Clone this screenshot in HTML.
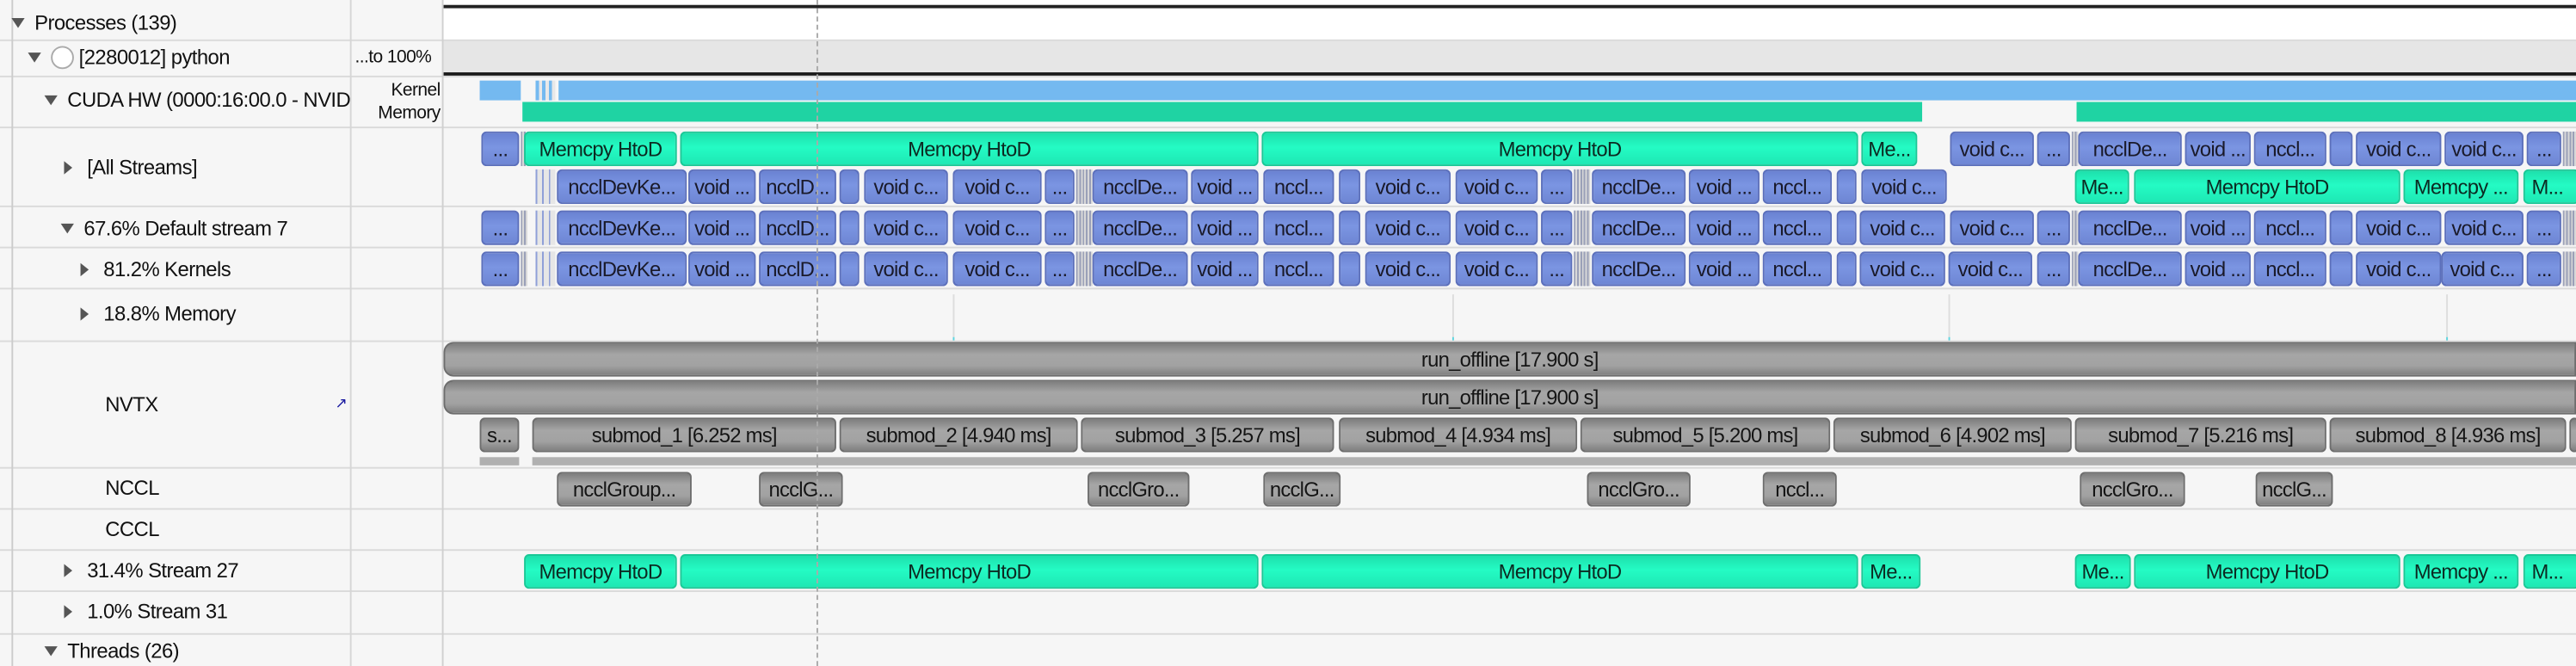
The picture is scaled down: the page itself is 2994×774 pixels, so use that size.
<!DOCTYPE html>
<html><head><meta charset="utf-8"><style>
html,body{margin:0;padding:0;width:2994px;height:774px;overflow:hidden;background:#f6f6f6}
#w{position:absolute;left:0;top:0;width:1568px;height:405px;transform-origin:0 0;transform:scale(1.90944,1.91111);font-family:"Liberation Sans",sans-serif;color:#111;background:#f6f6f6}
.a{position:absolute}
.hl{position:absolute;left:0;width:1568px;height:1px;background:#dadada}
.lab{position:absolute;font-size:12.5px;line-height:14px;white-space:nowrap;letter-spacing:-0.3px}
.tri{display:inline-block;width:0;height:0;border-left:4px solid transparent;border-right:4px solid transparent;border-top:6px solid #555;margin-right:6px;vertical-align:1px}
.trr{display:inline-block;width:0;height:0;border-top:4px solid transparent;border-bottom:4px solid transparent;border-left:5px solid #555;margin-right:9px;vertical-align:0px}
.r{position:absolute;left:0;width:1568px}
.b{position:absolute;top:0;height:21px;box-sizing:border-box;border-radius:3px;font-size:12.5px;line-height:20px;text-align:center;overflow:hidden;white-space:nowrap;letter-spacing:-0.4px;color:#1a1a2a}
.k{background:linear-gradient(#6a82d2,#7b95e2 45%,#6e86d4);border:1px solid #5b6fbb}
.m{background:linear-gradient(#1ee0ac,#24fbc4 45%,#1ee8b4);border:1px solid #19c896;color:#0c2a22}
.g{background:linear-gradient(#7e7e7e,#a6a6a6 35%,#a2a2a2 70%,#808080);border:1px solid #6d6d6d;color:#151515}
.s{position:absolute;top:0;height:21px;background:repeating-linear-gradient(90deg,#9aa0b8 0 1px,#d8d8d8 1px 2px)}
</style></head><body><div id="w">
<div class="a" style="left:0;top:0;width:1568px;height:24px;background:#f6f6f6"></div>
<div class="a" style="left:270px;top:0;width:1298px;height:24px;background:#fff"></div>
<div class="a" style="left:270px;top:3px;width:1298px;height:2px;background:#222"></div>
<div class="a" style="left:270px;top:25px;width:1298px;height:20px;background:#e6e6e6"></div>
<div class="a" style="left:270px;top:44px;width:1298px;height:2px;background:#1a1a1a"></div>
<div class="hl" style="top:24px"></div><div class="hl" style="top:46px"></div><div class="hl" style="top:77px"></div>
<div class="hl" style="top:125px"></div><div class="hl" style="top:150px"></div><div class="hl" style="top:175px"></div>
<div class="hl" style="top:207px"></div><div class="hl" style="top:284px"></div><div class="hl" style="top:309px"></div>
<div class="hl" style="top:334px"></div><div class="hl" style="top:359px"></div><div class="hl" style="top:385px"></div>
<div class="a" style="left:7px;top:0;width:1px;height:405px;background:#ccc"></div>
<div class="a" style="left:213px;top:0;width:1px;height:405px;background:#d6d6d6"></div>
<div class="a" style="left:269px;top:0;width:1px;height:405px;background:#d0d0d0"></div>
<div class="lab" style="left:7px;top:7px"><span class="tri"></span>Processes (139)</div>
<div class="lab" style="left:17px;top:28px"><span class="tri"></span><span style="display:inline-block;width:12px;height:12px;border:1px solid #aaa;border-radius:50%;vertical-align:-3px;margin-right:3px;background:#fff"></span>[2280012] python</div>
<div class="lab" style="left:216px;top:28px;font-size:11px">...to 100%</div>
<div class="lab" style="left:27px;top:54px;width:186px;overflow:hidden"><span class="tri"></span>CUDA HW (0000:16:00.0 - NVIDIA</div>
<div class="lab" style="left:230px;top:48px;font-size:11px;text-align:right;width:38px;line-height:14px">Kernel<br>Memory</div>
<div class="lab" style="left:39px;top:95px"><span class="trr"></span>[All Streams]</div>
<div class="lab" style="left:37px;top:132px"><span class="tri"></span>67.6% Default stream 7</div>
<div class="lab" style="left:49px;top:157px"><span class="trr"></span>81.2% Kernels</div>
<div class="lab" style="left:49px;top:184px"><span class="trr"></span>18.8% Memory</div>
<div class="lab" style="left:64px;top:239px">NVTX</div>
<div class="a" style="left:204px;top:240px;font-size:9px;color:#1a1aa0">&#8599;</div>
<div class="lab" style="left:64px;top:290px">NCCL</div>
<div class="lab" style="left:64px;top:315px">CCCL</div>
<div class="lab" style="left:39px;top:340px"><span class="trr"></span>31.4% Stream 27</div>
<div class="lab" style="left:39px;top:365px"><span class="trr"></span>1.0% Stream 31</div>
<div class="lab" style="left:27px;top:389px"><span class="tri"></span>Threads (26)</div>
<div class="a" style="left:292px;top:49px;width:25px;height:12px;background:#74b9f0"></div>
<div class="a" style="left:326px;top:49px;width:12px;height:12px;background:repeating-linear-gradient(90deg,#74b9f0 0 2px,#e8e8e8 2px 4px)"></div>
<div class="a" style="left:340px;top:49px;width:1228px;height:12px;background:#74b9f0"></div>
<div class="a" style="left:318px;top:62px;width:852px;height:12px;background:#1fd3a3"></div>
<div class="a" style="left:1264px;top:62px;width:304px;height:12px;background:#1fd3a3"></div>
<div class="r" style="top:80px">
<div class="b k" style="left:293px;width:23px">...</div><div class="s" style="left:317px;width:3px"></div>
<div class="b m" style="left:319px;width:93px">Memcpy HtoD</div>
<div class="b m" style="left:414px;width:352px">Memcpy HtoD</div>
<div class="b m" style="left:768px;width:363px">Memcpy HtoD</div>
<div class="b m" style="left:1133px;width:34px">Me...</div>
<div class="b k" style="left:1187px;width:51px">void c...</div>
<div class="b k" style="left:1240px;width:20px">...</div><div class="s" style="left:1261px;width:4px"></div>
<div class="b k" style="left:1265px;width:63px">ncclDe...</div>
<div class="b k" style="left:1330px;width:40px">void ...</div>
<div class="b k" style="left:1372px;width:44px">nccl...</div>
<div class="b k" style="left:1418px;width:14px"></div>
<div class="b k" style="left:1434px;width:52px">void c...</div>
<div class="b k" style="left:1488px;width:48px">void c...</div>
<div class="b k" style="left:1538px;width:21px">...</div><div class="s" style="left:1560px;width:8px"></div>
</div>
<div class="r" style="top:103px">
<div class="s" style="left:326px;width:12px;background:repeating-linear-gradient(90deg,#8fa0d8 0 1px,#e6e6e6 1px 4px)"></div>
<div class="b k" style="left:339px;width:79px">ncclDevKe...</div>
<div class="b k" style="left:419px;width:41px">void ...</div>
<div class="b k" style="left:462px;width:47px">ncclD...</div>
<div class="b k" style="left:511px;width:12px"></div>
<div class="b k" style="left:526px;width:51px">void c...</div>
<div class="b k" style="left:580px;width:54px">void c...</div>
<div class="b k" style="left:636px;width:18px">...</div><div class="s" style="left:655px;width:10px"></div>
<div class="b k" style="left:665px;width:58px">ncclDe...</div>
<div class="b k" style="left:725px;width:41px">void ...</div>
<div class="b k" style="left:769px;width:43px">nccl...</div>
<div class="b k" style="left:815px;width:13px"></div>
<div class="b k" style="left:831px;width:52px">void c...</div>
<div class="b k" style="left:886px;width:50px">void c...</div>
<div class="b k" style="left:938px;width:19px">...</div><div class="s" style="left:958px;width:10px"></div>
<div class="b k" style="left:969px;width:57px">ncclDe...</div>
<div class="b k" style="left:1028px;width:43px">void ...</div>
<div class="b k" style="left:1073px;width:42px">nccl...</div>
<div class="b k" style="left:1118px;width:12px"></div>
<div class="b k" style="left:1133px;width:52px">void c...</div>
<div class="b m" style="left:1263px;width:33px">Me...</div>
<div class="b m" style="left:1299px;width:162px">Memcpy HtoD</div>
<div class="b m" style="left:1463px;width:70px">Memcpy ...</div>
<div class="b m" style="left:1536px;width:34px;text-align:left;padding-left:4px">M...</div>
</div>
<div class="r" style="top:128px">
<div class="b k" style="left:293px;width:23px">...</div><div class="s" style="left:317px;width:4px"></div>
<div class="s" style="left:326px;width:12px;background:repeating-linear-gradient(90deg,#8fa0d8 0 1px,#e6e6e6 1px 4px)"></div>
<div class="b k" style="left:339px;width:79px">ncclDevKe...</div>
<div class="b k" style="left:419px;width:41px">void ...</div>
<div class="b k" style="left:462px;width:47px">ncclD...</div>
<div class="b k" style="left:511px;width:12px"></div>
<div class="b k" style="left:526px;width:51px">void c...</div>
<div class="b k" style="left:580px;width:54px">void c...</div>
<div class="b k" style="left:636px;width:18px">...</div><div class="s" style="left:655px;width:10px"></div>
<div class="b k" style="left:665px;width:58px">ncclDe...</div>
<div class="b k" style="left:725px;width:41px">void ...</div>
<div class="b k" style="left:769px;width:43px">nccl...</div>
<div class="b k" style="left:815px;width:13px"></div>
<div class="b k" style="left:831px;width:52px">void c...</div>
<div class="b k" style="left:886px;width:50px">void c...</div>
<div class="b k" style="left:938px;width:19px">...</div><div class="s" style="left:958px;width:10px"></div>
<div class="b k" style="left:969px;width:57px">ncclDe...</div>
<div class="b k" style="left:1028px;width:43px">void ...</div>
<div class="b k" style="left:1073px;width:42px">nccl...</div>
<div class="b k" style="left:1118px;width:12px"></div>
<div class="b k" style="left:1132px;width:52px">void c...</div>
<div class="b k" style="left:1187px;width:51px">void c...</div>
<div class="b k" style="left:1240px;width:20px">...</div><div class="s" style="left:1261px;width:4px"></div>
<div class="b k" style="left:1265px;width:63px">ncclDe...</div>
<div class="b k" style="left:1330px;width:40px">void ...</div>
<div class="b k" style="left:1372px;width:44px">nccl...</div>
<div class="b k" style="left:1418px;width:14px"></div>
<div class="b k" style="left:1434px;width:52px">void c...</div>
<div class="b k" style="left:1488px;width:48px">void c...</div>
<div class="b k" style="left:1538px;width:21px">...</div><div class="s" style="left:1560px;width:8px"></div>
</div>
<div class="r" style="top:153px">
<div class="b k" style="left:293px;width:23px">...</div><div class="s" style="left:317px;width:4px"></div>
<div class="s" style="left:326px;width:12px;background:repeating-linear-gradient(90deg,#8fa0d8 0 1px,#e6e6e6 1px 4px)"></div>
<div class="b k" style="left:339px;width:79px">ncclDevKe...</div>
<div class="b k" style="left:419px;width:41px">void ...</div>
<div class="b k" style="left:462px;width:47px">ncclD...</div>
<div class="b k" style="left:511px;width:12px"></div>
<div class="b k" style="left:526px;width:51px">void c...</div>
<div class="b k" style="left:580px;width:54px">void c...</div>
<div class="b k" style="left:636px;width:18px">...</div><div class="s" style="left:655px;width:10px"></div>
<div class="b k" style="left:665px;width:58px">ncclDe...</div>
<div class="b k" style="left:725px;width:41px">void ...</div>
<div class="b k" style="left:769px;width:43px">nccl...</div>
<div class="b k" style="left:815px;width:13px"></div>
<div class="b k" style="left:831px;width:52px">void c...</div>
<div class="b k" style="left:886px;width:50px">void c...</div>
<div class="b k" style="left:938px;width:19px">...</div><div class="s" style="left:958px;width:10px"></div>
<div class="b k" style="left:969px;width:57px">ncclDe...</div>
<div class="b k" style="left:1028px;width:43px">void ...</div>
<div class="b k" style="left:1073px;width:42px">nccl...</div>
<div class="b k" style="left:1118px;width:12px"></div>
<div class="b k" style="left:1132px;width:52px">void c...</div>
<div class="b k" style="left:1186px;width:51px">void c...</div>
<div class="b k" style="left:1240px;width:20px">...</div><div class="s" style="left:1261px;width:4px"></div>
<div class="b k" style="left:1265px;width:63px">ncclDe...</div>
<div class="b k" style="left:1330px;width:40px">void ...</div>
<div class="b k" style="left:1372px;width:44px">nccl...</div>
<div class="b k" style="left:1418px;width:14px"></div>
<div class="b k" style="left:1434px;width:52px">void c...</div>
<div class="b k" style="left:1486px;width:50px">void c...</div>
<div class="b k" style="left:1538px;width:21px">...</div><div class="s" style="left:1560px;width:8px"></div>
</div>
<div class="a" style="left:580px;top:179px;width:1px;height:26px;background:#ddd;border-bottom:2px solid #5cd6e0"></div>
<div class="a" style="left:884px;top:179px;width:1px;height:26px;background:#ddd;border-bottom:2px solid #5cd6e0"></div>
<div class="a" style="left:1186px;top:179px;width:1px;height:26px;background:#ddd;border-bottom:2px solid #5cd6e0"></div>
<div class="a" style="left:1489px;top:179px;width:1px;height:26px;background:#ddd;border-bottom:2px solid #5cd6e0"></div>
<div class="r" style="top:208px"><div class="b g" style="left:270px;width:1298px;height:21px;line-height:20px;border-radius:6px 0 0 6px">run_offline [17.900 s]</div></div>
<div class="r" style="top:231px"><div class="b g" style="left:270px;width:1298px;height:21px;line-height:20px;border-radius:6px 0 0 6px">run_offline [17.900 s]</div></div>
<div class="r" style="top:254px">
<div class="b g" style="left:292px;width:24px">s...</div>
<div class="b g" style="left:324px;width:185px">submod_1 [6.252 ms]</div>
<div class="b g" style="left:511px;width:145px">submod_2 [4.940 ms]</div>
<div class="b g" style="left:658px;width:154px">submod_3 [5.257 ms]</div>
<div class="b g" style="left:815px;width:145px">submod_4 [4.934 ms]</div>
<div class="b g" style="left:962px;width:152px">submod_5 [5.200 ms]</div>
<div class="b g" style="left:1116px;width:145px">submod_6 [4.902 ms]</div>
<div class="b g" style="left:1263px;width:153px">submod_7 [5.216 ms]</div>
<div class="b g" style="left:1418px;width:144px">submod_8 [4.936 ms]</div>
<div class="b g" style="left:1564px;width:6px"></div>
</div>
<div class="a" style="left:292px;top:278px;width:24px;height:5px;background:#b0b0b0"></div>
<div class="a" style="left:324px;top:278px;width:1244px;height:5px;background:#b0b0b0"></div>
<div class="r" style="top:287px">
<div class="b g" style="left:339px;width:82px">ncclGroup...</div>
<div class="b g" style="left:462px;width:51px">ncclG...</div>
<div class="b g" style="left:662px;width:62px">ncclGro...</div>
<div class="b g" style="left:769px;width:47px">ncclG...</div>
<div class="b g" style="left:966px;width:63px">ncclGro...</div>
<div class="b g" style="left:1073px;width:45px">nccl...</div>
<div class="b g" style="left:1266px;width:64px">ncclGro...</div>
<div class="b g" style="left:1373px;width:47px">ncclG...</div>
</div>
<div class="r" style="top:337px">
<div class="b m" style="left:319px;width:93px">Memcpy HtoD</div>
<div class="b m" style="left:414px;width:352px">Memcpy HtoD</div>
<div class="b m" style="left:768px;width:363px">Memcpy HtoD</div>
<div class="b m" style="left:1133px;width:36px">Me...</div>
<div class="b m" style="left:1263px;width:34px">Me...</div>
<div class="b m" style="left:1299px;width:162px">Memcpy HtoD</div>
<div class="b m" style="left:1463px;width:70px">Memcpy ...</div>
<div class="b m" style="left:1536px;width:34px;text-align:left;padding-left:4px">M...</div>
</div>
<div class="a" style="left:497px;top:0;width:0;height:405px;border-left:1px dashed #aaa"></div>
</div></body></html>
